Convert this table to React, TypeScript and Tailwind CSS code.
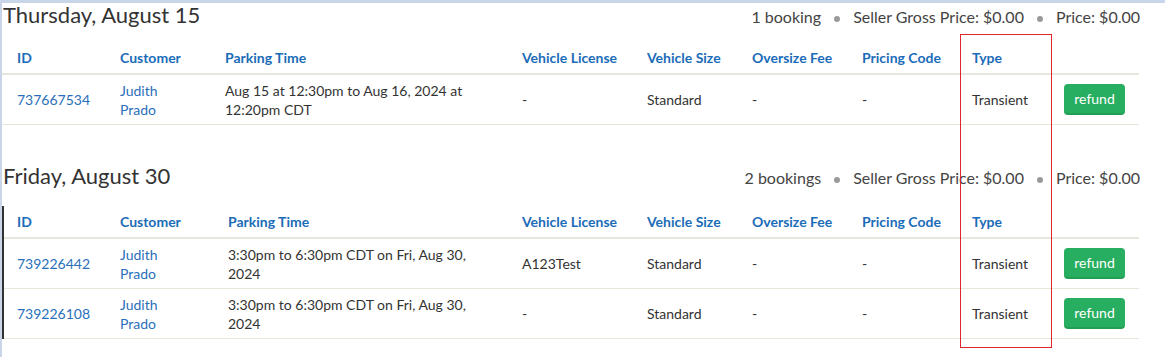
import React from "react";

type Booking = {
  id: string;
  time: string;
  license: string;
};

const headers = [
  "ID",
  "Customer",
  "Parking Time",
  "Vehicle License",
  "Vehicle Size",
  "Oversize Fee",
  "Pricing Code",
  "Type",
  "",
];

const Dot = () => <span className="mx-[13px] inline-block h-[6px] w-[6px] rounded-full bg-[#9a9a9a] align-middle" />;

const Section: React.FC<{
  title: string;
  count: string;
  bookings: Booking[];
  cols: string;
  bordered?: boolean;
}> = ({ title, count, bookings, cols, bordered }) => {
  return (
    <section>
      <div className="flex h-[24px] items-baseline justify-between pl-[1px] pr-[25px]">
        <h2 className="text-[22px] leading-[24px] text-[#333]">{title}</h2>
        <div className="text-[16px] leading-[24px] text-[#444]">
          {count}
          <Dot />
          Seller Gross Price: $0.00
          <Dot />
          Price: $0.00
        </div>
      </div>
      <div className={`w-[1137px] ${bordered ? "mt-[18px] border-l-2 border-[#333]" : "mt-[15px]"}`}>
        <div className={`grid ${cols} h-[33px] items-center border-b-2 border-[#e6e6da] text-[14px] font-bold text-[#1b6cb8]`}>
          {headers.map((h, i) => (
            <div key={i} className={i === 0 && bordered ? "pl-[13px]" : "pl-[15px]"}>
              {h}
            </div>
          ))}
        </div>
        {bookings.map((b) => (
          <div
            key={b.id}
            className={`grid ${cols} h-[50px] items-center border-b border-[#e6e6da] text-[14px] leading-[19px] text-[#333]`}
          >
            <div className={`${bordered ? "pl-[13px]" : "pl-[15px]"} text-[#2a6fba]`}>{b.id}</div>
            <div className="pl-[15px] text-[#2a6fba]">
              Judith
              <br />
              Prado
            </div>
            <div className="pl-[15px] pr-[20px]">{b.time}</div>
            <div className="pl-[15px]">{b.license}</div>
            <div className="pl-[15px]">Standard</div>
            <div className="pl-[15px]">-</div>
            <div className="pl-[15px]">-</div>
            <div className="pl-[15px]">Transient</div>
            <div className="pl-[15px]">
              <button className="h-[31px] w-[61px] rounded-[4px] border-b-2 border-[#229f55] bg-[#27ae60] text-[14px] text-white">
                refund
              </button>
            </div>
          </div>
        ))}
      </div>
    </section>
  );
};

export default function App() {
  return (
    <div
      className="relative h-[357px] w-[1165px] overflow-hidden border-t-[3px] border-l-2 border-[#c9d5e8] bg-white"
      style={{ fontFamily: "Lato, 'Open Sans', sans-serif" }}
    >
      <Section
        title="Thursday, August 15"
        count="1 booking"
        cols="grid-cols-[103px_105px_297px_125px_105px_110px_110px_92px_90px]"
        bookings={[
          {
            id: "737667534",
            time: "Aug 15 at 12:30pm to Aug 16, 2024 at 12:20pm CDT",
            license: "-",
          },
        ]}
      />
      <div className="h-[39px]" />
      <Section
        title="Friday, August 30"
        count="2 bookings"
        bordered
        cols="grid-cols-[101px_108px_294px_125px_105px_110px_110px_92px_90px]"
        bookings={[
          {
            id: "739226442",
            time: "3:30pm to 6:30pm CDT on Fri, Aug 30, 2024",
            license: "A123Test",
          },
          {
            id: "739226108",
            time: "3:30pm to 6:30pm CDT on Fri, Aug 30, 2024",
            license: "-",
          },
        ]}
      />
      <div className="pointer-events-none absolute left-[958px] top-[31px] h-[314px] w-[92px] border border-[#e0242c]" />
    </div>
  );
}
